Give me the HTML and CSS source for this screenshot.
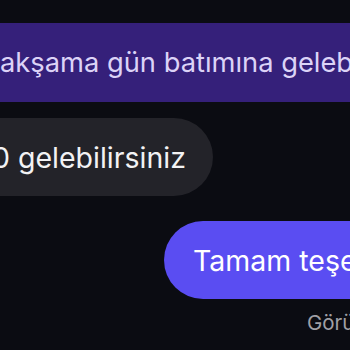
FILE: index.html
```html
<!DOCTYPE html>
<html lang="tr">
<head>
<meta charset="utf-8">
<link rel="stylesheet" href="styles.css">
</head>
<body>
<div class="thread">
  <div class="bar"><span class="bar-text">akşama gün batımına gelebilirsiniz</span></div>
  <div class="row row-in"><div class="bubble bubble-in">0 gelebilirsiniz</div></div>
  <div class="row row-out"><div class="bubble bubble-out">Tamam teşekkürler</div></div>
  <div class="seen">Görüldü</div>
</div>
</body>
</html>
```
FILE: styles.css
```css
html, body {
  margin: 0;
  padding: 0;
}
body {
  width: 350px;
  height: 350px;
  overflow: hidden;
  background: #0b0c12;
  font-family: Inter, "Noto Sans", sans-serif;
}
.thread {
  display: flex;
  flex-direction: column;
  padding-top: 23px;
}
.bar {
  height: 79px;
  background: #35207a;
  color: #dcd3f7;
  font-size: 27.3px;
  display: flex;
  align-items: center;
  white-space: nowrap;
  overflow: hidden;
}
.bar-text {
  margin-left: 0;
}
.row {
  display: flex;
  white-space: nowrap;
}
.bubble {
  height: 78px;
  border-radius: 39px;
  display: flex;
  align-items: center;
  font-size: 28.5px;
  flex-shrink: 0;
}
.row-in {
  margin-top: 16px;
}
.bubble-in {
  margin-left: -62px;
  padding: 0 27px 0 54px;
  background: #232329;
  color: #f2f2f4;
}
.row-out {
  margin-top: 25px;
  padding-left: 164px;
}
.bubble-out {
  padding: 0 30px 0 29px;
  background: #5a4df2;
  color: #ffffff;
}
.seen {
  margin-top: 11px;
  padding-left: 307px;
  white-space: nowrap;
  color: #a0a0a6;
  font-size: 20.5px;
}
```
